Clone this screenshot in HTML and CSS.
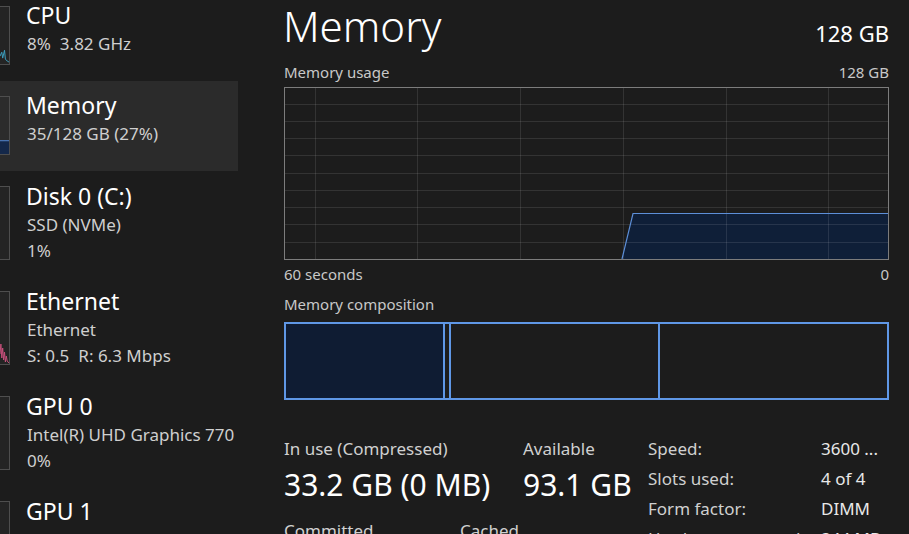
FILE: index.html
```html
<!DOCTYPE html>
<html lang="en">
<head>
<meta charset="utf-8">
<title>Task Manager - Memory</title>
<link rel="stylesheet" href="styles.css">
</head>
<body>
<div class="app">
  <nav class="sidebar">
    <div class="item">
      <div class="thumb short">
        <svg class="trace" viewBox="0 0 10 58" preserveAspectRatio="none"><polyline points="0,50 2,46 3,52 5,44 6,53 8,55 10,56" fill="none" stroke="#3ea3c4" stroke-width="1"/></svg>
      </div>
      <div class="info">
        <div class="name">CPU</div>
        <div class="sub">8%<span class="gap">3.82 GHz</span></div>
      </div>
    </div>
    <div class="item selected">
      <div class="thumb short">
        <svg class="trace" viewBox="0 0 10 58" preserveAspectRatio="none"><rect x="0" y="44" width="10" height="14" fill="#14284a"/><line x1="0" y1="44.5" x2="10" y2="44.5" stroke="#5b8fd6" stroke-width="1"/></svg>
      </div>
      <div class="info">
        <div class="name">Memory</div>
        <div class="sub">35/128 GB (27%)</div>
      </div>
    </div>
    <div class="item tall">
      <div class="thumb long"></div>
      <div class="info">
        <div class="name">Disk 0 (C:)</div>
        <div class="sub">SSD (NVMe)</div>
        <div class="sub">1%</div>
      </div>
    </div>
    <div class="item tall">
      <div class="thumb long">
        <svg class="trace" viewBox="0 0 10 72" preserveAspectRatio="none"><polyline points="0,62 1,52 2,66 3,56 4,68 5,60 6,70 7,64 8,69 10,71" fill="none" stroke="#c9507c" stroke-width="1"/></svg>
      </div>
      <div class="info">
        <div class="name">Ethernet</div>
        <div class="sub">Ethernet</div>
        <div class="sub">S: 0.5<span class="gap">R: 6.3 Mbps</span></div>
      </div>
    </div>
    <div class="item tall">
      <div class="thumb long"></div>
      <div class="info">
        <div class="name">GPU 0</div>
        <div class="sub">Intel(R) UHD Graphics 770</div>
        <div class="sub">0%</div>
      </div>
    </div>
    <div class="item tall">
      <div class="thumb long"></div>
      <div class="info">
        <div class="name">GPU 1</div>
        <div class="sub">NVIDIA GTX 1660</div>
        <div class="sub">1%</div>
      </div>
    </div>
  </nav>

  <main class="main">
    <header class="head">
      <h1 class="title">Memory</h1>
      <span class="total">128 GB</span>
    </header>
    <div class="label-row usage-row">
      <span>Memory usage</span>
      <span>128 GB</span>
    </div>
    <svg class="graph" width="605" height="173" viewBox="0 0 605 173">
      <polygon points="338,172 349,126 604,126 604,172" fill="#0f1f38"/>
      <g stroke="rgba(255,255,255,0.1)" stroke-width="1">
        <line x1="31.5" y1="0" x2="31.5" y2="173"/>
        <line x1="133.5" y1="0" x2="133.5" y2="173"/>
        <line x1="236.5" y1="0" x2="236.5" y2="173"/>
        <line x1="339.5" y1="0" x2="339.5" y2="173"/>
        <line x1="442.5" y1="0" x2="442.5" y2="173"/>
        <line x1="544.5" y1="0" x2="544.5" y2="173"/>
        <line x1="0" y1="17.5" x2="605" y2="17.5"/>
        <line x1="0" y1="34.5" x2="605" y2="34.5"/>
        <line x1="0" y1="51.5" x2="605" y2="51.5"/>
        <line x1="0" y1="68.5" x2="605" y2="68.5"/>
        <line x1="0" y1="86.5" x2="605" y2="86.5"/>
        <line x1="0" y1="103.5" x2="605" y2="103.5"/>
        <line x1="0" y1="120.5" x2="605" y2="120.5"/>
        <line x1="0" y1="137.5" x2="605" y2="137.5"/>
        <line x1="0" y1="155.5" x2="605" y2="155.5"/>
      </g>
      <polyline points="338,172 349,126.5 604,126.5" fill="none" stroke="#5d8fd8" stroke-width="1.2"/>
      <rect x="0.5" y="0.5" width="604" height="172" fill="none" stroke="#7c7c7c" stroke-width="1"/>
    </svg>
    <div class="label-row axis-row">
      <span>60 seconds</span>
      <span>0</span>
    </div>
    <div class="label-row comp-label">
      <span>Memory composition</span>
    </div>
    <div class="comp">
      <div class="seg inuse"></div>
      <div class="seg modified"></div>
      <div class="seg standby"></div>
      <div class="seg free"></div>
    </div>

    <section class="stats">
      <div class="stats-left">
        <div class="stat-row first">
          <div class="stat inuse-stat">
            <div class="stat-label">In use (Compressed)</div>
            <div class="stat-value">33.2 GB (0 MB)</div>
          </div>
          <div class="stat">
            <div class="stat-label">Available</div>
            <div class="stat-value">93.1 GB</div>
          </div>
        </div>
        <div class="stat-row second">
          <div class="stat committed-stat">
            <div class="stat-label">Committed</div>
            <div class="stat-value">35/146 GB</div>
          </div>
          <div class="stat">
            <div class="stat-label">Cached</div>
            <div class="stat-value">57.4 GB</div>
          </div>
        </div>
      </div>
      <dl class="specs">
        <dt>Speed:</dt><dd>3600 ...</dd>
        <dt>Slots used:</dt><dd>4 of 4</dd>
        <dt>Form factor:</dt><dd>DIMM</dd>
        <dt>Hardware reserved:</dt><dd>344 MB</dd>
      </dl>
    </section>
  </main>
</div>
</body>
</html>
```

FILE: styles.css
```css
* { box-sizing: border-box; }

html, body {
  margin: 0;
  padding: 0;
  width: 909px;
  height: 534px;
  overflow: hidden;
  background: #1c1c1c;
  color: #ffffff;
  font-family: "Noto Sans", "Open Sans", sans-serif;
}

.app {
  display: flex;
  height: 534px;
  overflow: hidden;
}

/* ---------- Sidebar ---------- */
.sidebar {
  width: 238px;
  flex: none;
  display: flex;
  flex-direction: column;
  margin-top: -9px;
}

.item {
  display: flex;
  align-items: flex-start;
  height: 90px;
  flex: none;
}
.item.tall { height: 105px; }
.item.selected { background: #2b2b2b; }

.thumb {
  width: 10px;
  flex: none;
  margin-top: 15px;
  background: #242424;
  border: 1px solid #4e4e4e;
  border-left: none;
  position: relative;
  overflow: hidden;
}
.thumb.short { height: 59px; }
.thumb.long { height: 74px; }
.item.selected .thumb { background: #2c2c2c; }

.trace {
  display: block;
  width: 100%;
  height: 100%;
}

.info {
  margin-left: 16px;
  padding-top: 9px;
  white-space: nowrap;
}
.item.tall .info { padding-top: 10px; }
.name {
  font-size: 23px;
  line-height: 31px;
  color: #ffffff;
}
.sub {
  font-size: 17px;
  line-height: 25px;
  color: #cfcfcf;
  padding-left: 1px;
}
.item.tall .sub + .sub { margin-top: 1px; }
.gap { margin-left: 9px; }

/* ---------- Main ---------- */
.main {
  flex: 1;
  padding: 0 20px 0 46px;
  display: flex;
  flex-direction: column;
  min-width: 0;
}

.head {
  display: flex;
  justify-content: space-between;
  align-items: baseline;
}
.title {
  margin: 0;
  font-size: 42px;
  font-weight: 300;
  line-height: 52px;
  color: #ffffff;
  margin-left: -1px;
}
.total {
  font-size: 22px;
  line-height: 36px;
  color: #ffffff;
}

.label-row {
  display: flex;
  justify-content: space-between;
  font-size: 15px;
  line-height: 20px;
  color: #c8c8c8;
  height: 20px;
}
.usage-row { margin-top: 10px; }
.axis-row { margin-top: 4px; }
.comp-label { margin-top: 10px; }

.graph {
  display: block;
  margin-top: 5px;
  flex: none;
}

.comp {
  margin-top: 8px;
  height: 78px;
  border: 2px solid #5f97e6;
  display: flex;
  flex: none;
}
.seg {
  height: 100%;
  border-right: 2px solid #5f97e6;
}
.seg.inuse { width: 159px; background: #0f1c33; }
.seg.modified { width: 6px; }
.seg.standby { width: 209px; }
.seg.free { flex: 1; border-right: none; }

/* ---------- Stats ---------- */
.stats {
  display: flex;
  align-items: flex-start;
  margin-top: 34px;
}
.stats-left {
  width: 364px;
  flex: none;
  padding-top: 3px;
}
.stat-row { display: flex; }
.stat-row.second { margin-top: 16px; }
.inuse-stat { width: 239px; flex: none; }
.committed-stat { width: 176px; flex: none; }

.stat-label {
  font-size: 17px;
  line-height: 24px;
  color: #d0d0d0;
  white-space: nowrap;
}
.stat-value {
  margin-top: 6px;
  font-size: 30px;
  line-height: 36px;
  color: #ffffff;
  white-space: nowrap;
}

.specs {
  margin: 0;
  display: grid;
  grid-template-columns: 173px auto;
  grid-auto-rows: 30px;
  align-content: start;
  font-size: 17px;
  line-height: 30px;
  color: #d0d0d0;
}
.specs dt, .specs dd {
  margin: 0;
  white-space: nowrap;
}
.specs dd { color: #e8e8e8; }
```
